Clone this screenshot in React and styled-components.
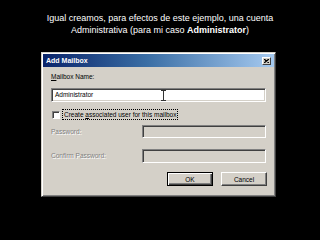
import React from 'react'
import styled, { createGlobalStyle } from 'styled-components'

const face = '#d4d0c8'
const shadow = '#808080'
const darkShadow = '#404040'
const dialogFont = `'Liberation Sans', Arial, sans-serif`

const GlobalStyle = createGlobalStyle`
  html, body {
    margin: 0;
    padding: 0;
    background: #000;
  }
  * { box-sizing: border-box; }
`

const Page = styled.div`
  width: 320px;
  height: 240px;
  background: #000;
  padding-top: 12px;
  overflow: hidden;
`

const Caption = styled.div`
  font-family: 'Liberation Sans', Arial, sans-serif;
  font-size: 9px;
  line-height: 12px;
  color: #fff;
  text-align: center;
  b { font-weight: bold; }
`

const Dialog = styled.div`
  margin: 16px 0 0 41px;
  width: 235px;
  height: 145px;
  background: ${face};
  border: 1px solid;
  border-color: ${face} ${darkShadow} ${darkShadow} ${face};
  box-shadow: inset 1px 1px #fff, inset -1px -1px ${shadow};
  padding: 1px;
  font-family: ${dialogFont};
  font-size: 6.5px;
  color: #000;
`

const TitleBar = styled.div`
  height: 13px;
  display: flex;
  align-items: center;
  justify-content: space-between;
  padding: 0 3px 0 3px;
  background: linear-gradient(to right, #0a246a 0%, #3a6ea5 45%, #a6caf0 100%);
  color: #fff;
  font-weight: bold;
  font-size: 7px;
`

const CloseButton = styled.div`
  width: 9px;
  height: 8px;
  background: ${face};
  border: 1px solid;
  border-color: #fff ${darkShadow} ${darkShadow} #fff;
  display: flex;
  align-items: center;
  justify-content: center;
`

const Body = styled.div`
  display: flex;
  flex-direction: column;
  padding: 6px 8px 0 8px;
`

const Label = styled.div`
  height: 8px;
  line-height: 8px;
  color: ${p => (p.$disabled ? shadow : '#000')};
  text-shadow: ${p => (p.$disabled ? '1px 1px #fff' : 'none')};
  u { text-decoration: underline; }
`

const Field = styled.div`
  position: relative;
  height: ${p => p.$h || 14}px;
  width: ${p => (p.$w ? `${p.$w}px` : '100%')};
  margin-top: ${p => p.$mt || 0}px;
  background: ${p => (p.$disabled ? face : '#fff')};
  border: 1px solid;
  border-color: ${shadow} #fff #fff ${shadow};
  box-shadow: inset 1px 1px ${darkShadow}, inset -1px -1px ${face};
  padding-left: 3px;
  display: flex;
  align-items: center;
  line-height: 8px;
`

const Cursor = styled.svg`
  position: absolute;
  left: 109px;
  top: 1px;
`

const CheckRow = styled.div`
  display: flex;
  align-items: center;
  gap: 3px;
  margin-top: 8px;
  height: 9px;
  padding-left: 1px;
`

const CheckBox = styled.div`
  width: 8px;
  height: 8px;
  background: #fff;
  border: 1px solid;
  border-color: ${shadow} #fff #fff ${shadow};
  box-shadow: inset 1px 1px ${darkShadow};
`

const FocusLabel = styled.div`
  outline: 1px dotted #000;
  padding: 0 1px;
  line-height: 9px;
  u { text-decoration: underline; }
`

const Row = styled.div`
  display: flex;
  align-items: center;
  justify-content: space-between;
  margin-top: ${p => p.$mt}px;
`

const Buttons = styled.div`
  display: flex;
  justify-content: flex-end;
  gap: 8px;
  margin-top: 9px;
  margin-right: -1px;
`

const Button = styled.div`
  width: 46px;
  height: 14px;
  background: ${face};
  display: flex;
  align-items: center;
  justify-content: center;
  border: 1px solid;
  border-color: ${p => (p.$default ? '#000' : `#fff ${darkShadow} ${darkShadow} #fff`)};
  box-shadow: ${p =>
    p.$default
      ? `inset 1px 1px #fff, inset -1px -1px ${darkShadow}, inset -2px -2px ${shadow}`
      : `inset -1px -1px ${shadow}`};
`

export default function App() {
  return (
    <Page>
      <GlobalStyle />
      <Caption>
        Igual creamos, para efectos de este ejemplo, una cuenta
        <br />
        Administrativa (para mi caso <b>Administrator</b>)
      </Caption>
      <Dialog>
        <TitleBar>
          <span>Add Mailbox</span>
          <CloseButton>
            <svg width="5" height="4" viewBox="0 0 5 4">
              <path d="M0 0 L5 4 M5 0 L0 4" stroke="#000" strokeWidth="1.3" />
            </svg>
          </CloseButton>
        </TitleBar>
        <Body>
          <Label>
            <u>M</u>ailbox Name:
          </Label>
          <Field $mt={7}>
            Administrator
            <Cursor width="5" height="11" viewBox="0 0 5 11">
              <path d="M0 0.5 H5 M2.5 0.5 V10.5 M0 10.5 H5" stroke="#333" strokeWidth="1" fill="none" />
            </Cursor>
          </Field>
          <CheckRow>
            <CheckBox />
            <FocusLabel>
              Create <u>a</u>ssociated user for this mailbox
            </FocusLabel>
          </CheckRow>
          <Row $mt={6}>
            <Label $disabled>Password:</Label>
            <Field $w={124} $h={13} $disabled />
          </Row>
          <Row $mt={11}>
            <Label $disabled>Confirm Password:</Label>
            <Field $w={124} $h={14} $disabled />
          </Row>
          <Buttons>
            <Button $default>OK</Button>
            <Button>Cancel</Button>
          </Buttons>
        </Body>
      </Dialog>
    </Page>
  )
}
